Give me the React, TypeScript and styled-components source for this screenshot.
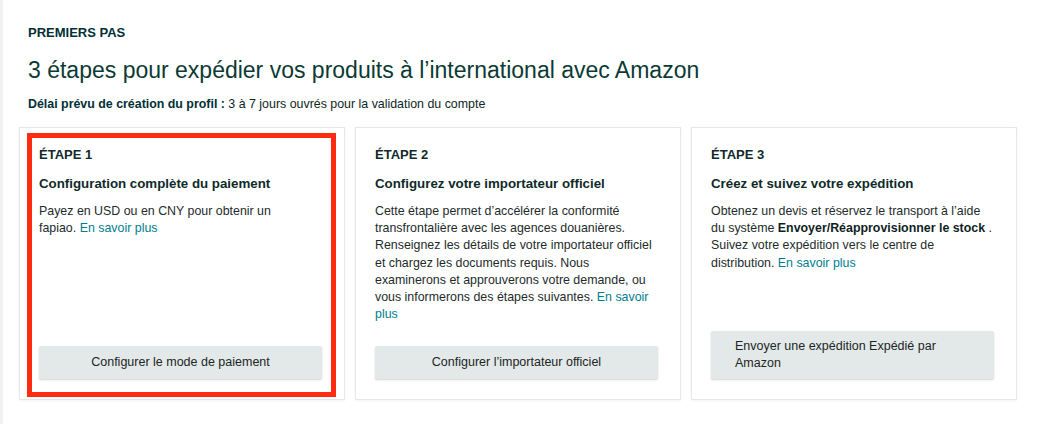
import React from 'react';
import styled, { createGlobalStyle } from 'styled-components';

const GlobalStyle = createGlobalStyle`
  html, body {
    margin: 0;
    padding: 0;
    background: #f0f1f1;
  }
  body {
    font-family: "Liberation Sans", Arial, sans-serif;
    color: #0f1111;
  }
`;

interface ButtonProps {
    twoLines?: boolean;
}

const S = {
    Page: styled.div`
    margin-left: 3px;
    background: #ffffff;
    min-height: 424px;
    padding: 25px 22px 0 16px;
    box-sizing: border-box;
  `,
    Intro: styled.div`
    padding-left: 9px;
  `,
    Kicker: styled.div`
    font-size: 13px;
    line-height: 16px;
    font-weight: 700;
    color: #002f36;
  `,
    Title: styled.h1`
    margin: 15px 0 0;
    font-size: 23px;
    line-height: 28px;
    font-weight: 400;
    color: #0b3a35;
  `,
    Delay: styled.p`
    margin: 12px 0 0;
    font-size: 12.4px;
    line-height: 16px;
    color: #0f2626;
    b {
      font-weight: 700;
      color: #002f36;
    }
  `,
    Grid: styled.div`
    margin-top: 15px;
    display: grid;
    grid-template-columns: repeat(3, 1fr);
    gap: 10px;
  `,
    Card: styled.section`
    position: relative;
    display: flex;
    flex-direction: column;
    height: 273px;
    box-sizing: border-box;
    padding: 19px 22px 20px 19px;
    background: #ffffff;
    border: 1px solid #e6e8e8;
    box-shadow: 0 1px 3px rgba(0, 0, 0, 0.05);
  `,
    Step: styled.div`
    font-size: 13px;
    line-height: 16px;
    font-weight: 700;
    color: #0f2a2a;
  `,
    CardTitle: styled.h2`
    margin: 12px 0 0;
    font-size: 13.3px;
    line-height: 18px;
    font-weight: 700;
    color: #0f2a2a;
  `,
    Body: styled.p`
    margin: 10px 0 0;
    font-size: 12.4px;
    line-height: 17.2px;
    color: #1e2b2b;
    b {
      font-weight: 700;
      color: #0f1f1f;
    }
  `,
    Link: styled.a`
    color: #00808f;
    text-decoration: none;
    cursor: pointer;
  `,
    Button: styled.button<ButtonProps>`
    margin-top: auto;
    width: 100%;
    box-sizing: border-box;
    padding: ${({ twoLines }) => (twoLines ? '7px 24px' : '8px 24px')};
    border: none;
    border-radius: 2px;
    background: #e3e8e8;
    box-shadow: 0 1px 2px rgba(0, 0, 0, 0.18);
    font-family: inherit;
    font-size: 12.5px;
    line-height: 17px;
    color: #1c2626;
    text-align: center;
    cursor: pointer;
    span {
      display: inline-block;
      text-align: left;
    }
  `,
    Highlight: styled.div`
    position: absolute;
    top: 5px;
    left: 7px;
    right: 8px;
    bottom: 2px;
    border: 5px solid #ff2c12;
    pointer-events: none;
  `
};

const App: React.FC = () => {
    return (
        <>
            <GlobalStyle />
            <S.Page>
                <S.Intro>
                    <S.Kicker>PREMIERS PAS</S.Kicker>
                    <S.Title>3 étapes pour expédier vos produits à l’international avec Amazon</S.Title>
                    <S.Delay>
                        <b>Délai prévu de création du profil :</b> 3 à 7 jours ouvrés pour la validation du compte
                    </S.Delay>
                </S.Intro>

                <S.Grid>
                    <S.Card>
                        <S.Step>ÉTAPE 1</S.Step>
                        <S.CardTitle>Configuration complète du paiement</S.CardTitle>
                        <S.Body>
                            Payez en USD ou en CNY pour obtenir un
                            <br />
                            fapiao. <S.Link>En savoir plus</S.Link>
                        </S.Body>
                        <S.Button>
                            <span>Configurer le mode de paiement</span>
                        </S.Button>
                        <S.Highlight />
                    </S.Card>

                    <S.Card>
                        <S.Step>ÉTAPE 2</S.Step>
                        <S.CardTitle>Configurez votre importateur officiel</S.CardTitle>
                        <S.Body>
                            Cette étape permet d’accélérer la conformité transfrontalière avec les agences douanières.
                            Renseignez les détails de votre importateur officiel et chargez les documents requis. Nous
                            examinerons et approuverons votre demande, ou vous informerons des étapes suivantes.{' '}
                            <S.Link>En savoir plus</S.Link>
                        </S.Body>
                        <S.Button>
                            <span>Configurer l’importateur officiel</span>
                        </S.Button>
                    </S.Card>

                    <S.Card>
                        <S.Step>ÉTAPE 3</S.Step>
                        <S.CardTitle>Créez et suivez votre expédition</S.CardTitle>
                        <S.Body>
                            Obtenez un devis et réservez le transport à l’aide du système{' '}
                            <b>Envoyer/Réapprovisionner le stock</b> . Suivez votre expédition vers le centre de
                            distribution. <S.Link>En savoir plus</S.Link>
                        </S.Body>
                        <S.Button twoLines>
                            <span>Envoyer une expédition Expédié par Amazon</span>
                        </S.Button>
                    </S.Card>
                </S.Grid>
            </S.Page>
        </>
    );
};

export default App;
